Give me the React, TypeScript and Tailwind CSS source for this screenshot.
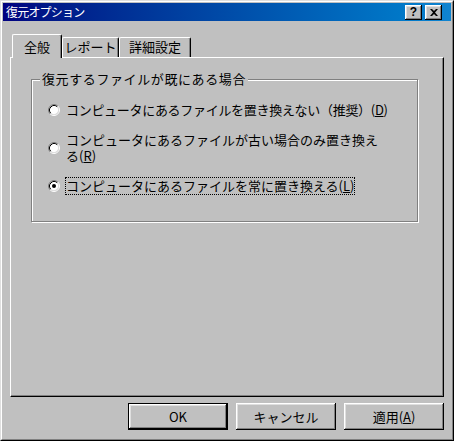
import React from "react";

const RAISED =
  "shadow-[inset_-1px_-1px_#000,inset_1px_1px_#fff,inset_-2px_-2px_#808080,inset_2px_2px_#dfdfdf]";

function Radio({ checked }: { checked?: boolean }) {
  return (
    <svg width="12" height="12" viewBox="0 0 12 12" className="shrink-0">
      <circle cx="6" cy="6" r="4.5" fill="#fff" />
      <path d="M2.11 9.89A5.5 5.5 0 0 1 9.89 2.11" stroke="#808080" fill="none" />
      <path d="M9.89 2.11A5.5 5.5 0 0 1 2.11 9.89" stroke="#fff" fill="none" />
      <path d="M2.82 9.18A4.5 4.5 0 0 1 9.18 2.82" stroke="#000" fill="none" />
      <path d="M9.18 2.82A4.5 4.5 0 0 1 2.82 9.18" stroke="#dfdfdf" fill="none" />
      {checked && <circle cx="6" cy="6" r="2" fill="#000" />}
    </svg>
  );
}

function Tab({ label, selected, w }: { label: string; selected?: boolean; w: string }) {
  return (
    <div
      className={
        (selected
          ? "h-[24px] -mb-px bg-[#c0c0c0] pt-[4px] "
          : "h-[20px] pt-[1px] ") +
        w +
        " flex justify-center border-l border-t border-r border-l-white border-t-white border-r-black rounded-tl-[2px] rounded-tr-[2px] shadow-[inset_-1px_0_#808080] leading-[16px]"
      }
    >
      {label}
    </div>
  );
}

export default function App() {
  return (
    <div className="w-[454px] h-[441px] bg-[#c0c0c0] border border-t-[#dfdfdf] border-l-[#dfdfdf] border-r-black border-b-black font-['Noto_Sans_CJK_JP',sans-serif] text-[13px] text-black">
      <div className="w-full h-full border border-t-white border-l-white border-r-[#808080] border-b-[#808080] p-px flex flex-col">
        {/* Title bar */}
        <div className="h-[18px] bg-linear-to-r from-[#000080] to-[#1084d0] flex items-center pl-[3px] pr-[9px]">
          <span className="text-white text-[12px] leading-[16px] tracking-[-0.8px] flex-1">復元オプション</span>
          <div className="flex gap-[3px]">
            <div className={"w-[17px] h-[15px] bg-[#c0c0c0] flex items-center justify-center text-[12px] font-bold leading-none font-['Liberation_Sans',sans-serif] " + RAISED}>
              ?
            </div>
            <div className={"w-[17px] h-[15px] bg-[#c0c0c0] flex items-center justify-center " + RAISED}>
              <svg width="8" height="7" viewBox="0 0 8 7">
                <path d="M0 0h2l2 2 2-2h2L5 3.5 8 7H6L4 5 2 7H0l3-3.5z" fill="#000" />
              </svg>
            </div>
          </div>
        </div>

        {/* Tabs */}
        <div className="mt-[13px] mx-[7px] relative z-10 h-[23px] flex items-end pl-[2px]">
          <Tab label="全般" selected w="w-[50px]" />
          <Tab label="レポート" w="w-[57px]" />
          <Tab label="詳細設定" w="w-[72px]" />
        </div>

        {/* Panel */}
        <div className="mx-[7px] h-[340px] border border-t-white border-l-white border-r-black border-b-black shadow-[inset_-1px_-1px_#808080] pt-[21px] pl-[20px] pr-[25px]">
          <div className="relative h-[143px] border border-[#808080] shadow-[inset_1px_1px_#fff,1px_1px_#fff] pt-[22px] pl-[16px]">
            <span className="absolute -top-[9px] left-[8px] px-[2px] bg-[#c0c0c0] leading-[16px] tracking-[0.6px]">
              復元するファイルが既にある場合
            </span>
            <div className="h-[15px] flex items-center gap-[5px]">
              <Radio />
              <span className="border border-transparent leading-[15px] whitespace-nowrap tracking-[-0.3px]">
                コンピュータにあるファイルを置き換えない（推奨）(<span className="underline">D</span>)
              </span>
            </div>
            <div className="mt-[15px] h-[32px] flex items-center gap-[5px]">
              <Radio />
              <span className="border border-transparent leading-[16px] whitespace-nowrap">
                コンピュータにあるファイルが古い場合のみ置き換え
                <br />る(<span className="underline">R</span>)
              </span>
            </div>
            <div className="mt-[13px] h-[18px] flex items-center gap-[5px]">
              <Radio checked />
              <span className="border border-dotted border-black leading-[16px] whitespace-nowrap">
                コンピュータにあるファイルを常に置き換える(<span className="underline">L</span>)
              </span>
            </div>
          </div>
        </div>

        {/* Buttons */}
        <div className="mt-[6px] flex justify-end gap-[8px] pr-[7px]">
          <div className="w-[100px] h-[27px] border border-black">
            <div className={"w-full h-full flex items-center justify-center leading-[15px] " + RAISED}>OK</div>
          </div>
          <div className={"w-[100px] h-[27px] flex items-center justify-center leading-[15px] " + RAISED}>キャンセル</div>
          <div className={"w-[100px] h-[27px] flex items-center justify-center leading-[15px] " + RAISED}>
            適用(<span className="underline">A</span>)
          </div>
        </div>
      </div>
    </div>
  );
}
